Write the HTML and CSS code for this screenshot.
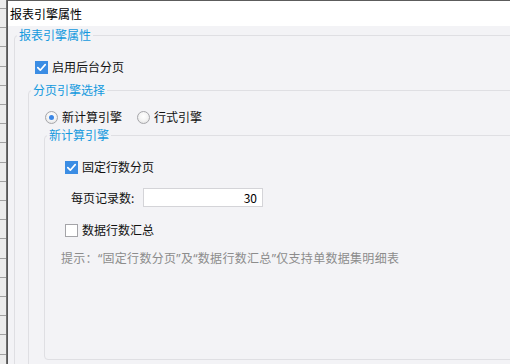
FILE: index.html
```html
<!DOCTYPE html>
<html lang="zh">
<head>
<meta charset="utf-8">
<title>报表引擎属性</title>
<link rel="stylesheet" href="styles.css">
</head>
<body>
<div class="screen">
  <div class="sheet"></div>
  <div class="divider"></div>
  <div class="dialog">
    <div class="titlebar">报表引擎属性</div>
    <div class="body">
      <fieldset class="group g1">
        <legend>报表引擎属性</legend>
        <label class="row check-row r-enable">
          <span class="cb checked"><svg viewBox="0 0 13 13" width="13" height="13"><path d="M2.8 6.6 L5.3 9.2 L10.2 3.6" fill="none" stroke="#fff" stroke-width="1.7" stroke-linecap="round" stroke-linejoin="round"/></svg></span>
          <span class="txt">启用后台分页</span>
        </label>
        <fieldset class="group g2">
          <legend>分页引擎选择</legend>
          <div class="row radio-row">
            <label class="radio-item"><span class="radio on"></span><span class="txt">新计算引擎</span></label>
            <label class="radio-item"><span class="radio"></span><span class="txt">行式引擎</span></label>
          </div>
          <fieldset class="group g3">
            <legend>新计算引擎</legend>
            <label class="row check-row r-fixed">
              <span class="cb checked"><svg viewBox="0 0 13 13" width="13" height="13"><path d="M2.8 6.6 L5.3 9.2 L10.2 3.6" fill="none" stroke="#fff" stroke-width="1.7" stroke-linecap="round" stroke-linejoin="round"/></svg></span>
              <span class="txt">固定行数分页</span>
            </label>
            <div class="row input-row">
              <span class="lbl">每页记录数:</span>
              <span class="input">30</span>
            </div>
            <label class="row check-row r-sum">
              <span class="cb"></span>
              <span class="txt">数据行数汇总</span>
            </label>
            <div class="row hint">提示：“固定行数分页”及“数据行数汇总”仅支持单数据集明细表</div>
          </fieldset>
        </fieldset>
      </fieldset>
    </div>
  </div>
</div>
</body>
</html>
```

FILE: styles.css
```css
html, body {
  margin: 0;
  padding: 0;
  width: 510px;
  height: 364px;
  overflow: hidden;
  background: #f3f3f6;
}

.screen {
  display: flex;
  width: 510px;
  height: 364px;
  overflow: hidden;
  font-family: "Noto Sans CJK SC", "Noto Sans", sans-serif;
  font-size: 12px;
  color: #111;
}

.sheet {
  flex: 0 0 6px;
  background-color: #ececec;
  background-image: repeating-linear-gradient(to bottom, transparent 0, transparent 8px, #a2a2a2 8px, #a2a2a2 9px, transparent 9px, transparent 19.2px);
}

.divider {
  flex: 0 0 2px;
  background: linear-gradient(to right, #7a7a7a, #4a4a4a);
}

.dialog {
  flex: 1 1 auto;
  min-width: 0;
  display: flex;
  flex-direction: column;
  background: #f3f3f6;
}

.titlebar {
  flex: 0 0 auto;
  height: 25px;
  border-top: 1px solid #5c5c5c;
  background: #ffffff;
  padding-left: 2px;
  display: flex;
  align-items: center;
  line-height: 16px;
  color: #000;
}

.body {
  flex: 0 0 auto;
  padding: 1px 0 0 6px;
}

.group {
  margin: 0;
  padding: 0;
  border: 1px solid #dfdfe3;
  border-radius: 4px;
  min-width: 0;
}

.group > legend {
  margin-left: 2px;
  padding: 0 2px;
  line-height: 16px;
  height: 16px;
  color: #1299de;
  font-size: 12px;
}

.g1 {
  width: 560px;
  padding-bottom: 40px;
}

.g2 {
  margin: 7px 0 0 13px;
  padding-bottom: 30px;
}

.g3 {
  margin: 2px 0 0 15px;
  padding-bottom: 92px;
}

.row {
  display: flex;
  align-items: center;
  height: 16px;
  line-height: 16px;
}

.check-row .txt {
  margin-left: 4px;
}

.r-enable {
  margin: 16px 0 0 20px;
}

.radio-row {
  margin: 11px 0 0 16px;
  gap: 15px;
}

.radio-item {
  display: flex;
  align-items: center;
}

.radio-item .txt {
  margin-left: 4px;
}

.r-fixed {
  margin: 16px 0 0 20px;
}

.input-row {
  margin: 13px 0 0 26px;
  height: 19px;
}

.lbl {
  width: 72px;
}

.input {
  box-sizing: border-box;
  width: 120px;
  height: 19px;
  border: 1px solid #d4d4d8;
  background: #fff;
  text-align: right;
  padding-right: 5px;
  line-height: 17px;
  color: #000;
}

.r-sum {
  margin: 15px 0 0 20px;
}

.hint {
  margin: 13px 0 0 16px;
  color: #8c8c8c;
  white-space: nowrap;
  letter-spacing: 0.3px;
  font-family: "Noto Sans", "Noto Sans CJK SC", sans-serif;
}

.cb {
  box-sizing: border-box;
  width: 13px;
  height: 13px;
  flex: 0 0 13px;
  border: 1px solid #a4a4a8;
  background: #fff;
  display: block;
}

.cb.checked {
  border: none;
  background: #3b8de4;
}

.cb svg {
  display: block;
}

.radio {
  box-sizing: border-box;
  width: 13px;
  height: 13px;
  flex: 0 0 13px;
  border-radius: 50%;
  border: 1px solid #a6a6aa;
  background: radial-gradient(circle at 50% 40%, #ffffff 0, #f4f4f4 50%, #dcdcdc 100%);
  position: relative;
}

.radio.on::after {
  content: "";
  position: absolute;
  left: 3px;
  top: 3px;
  width: 5px;
  height: 5px;
  border-radius: 50%;
  background: #3a86e6;
}
```
